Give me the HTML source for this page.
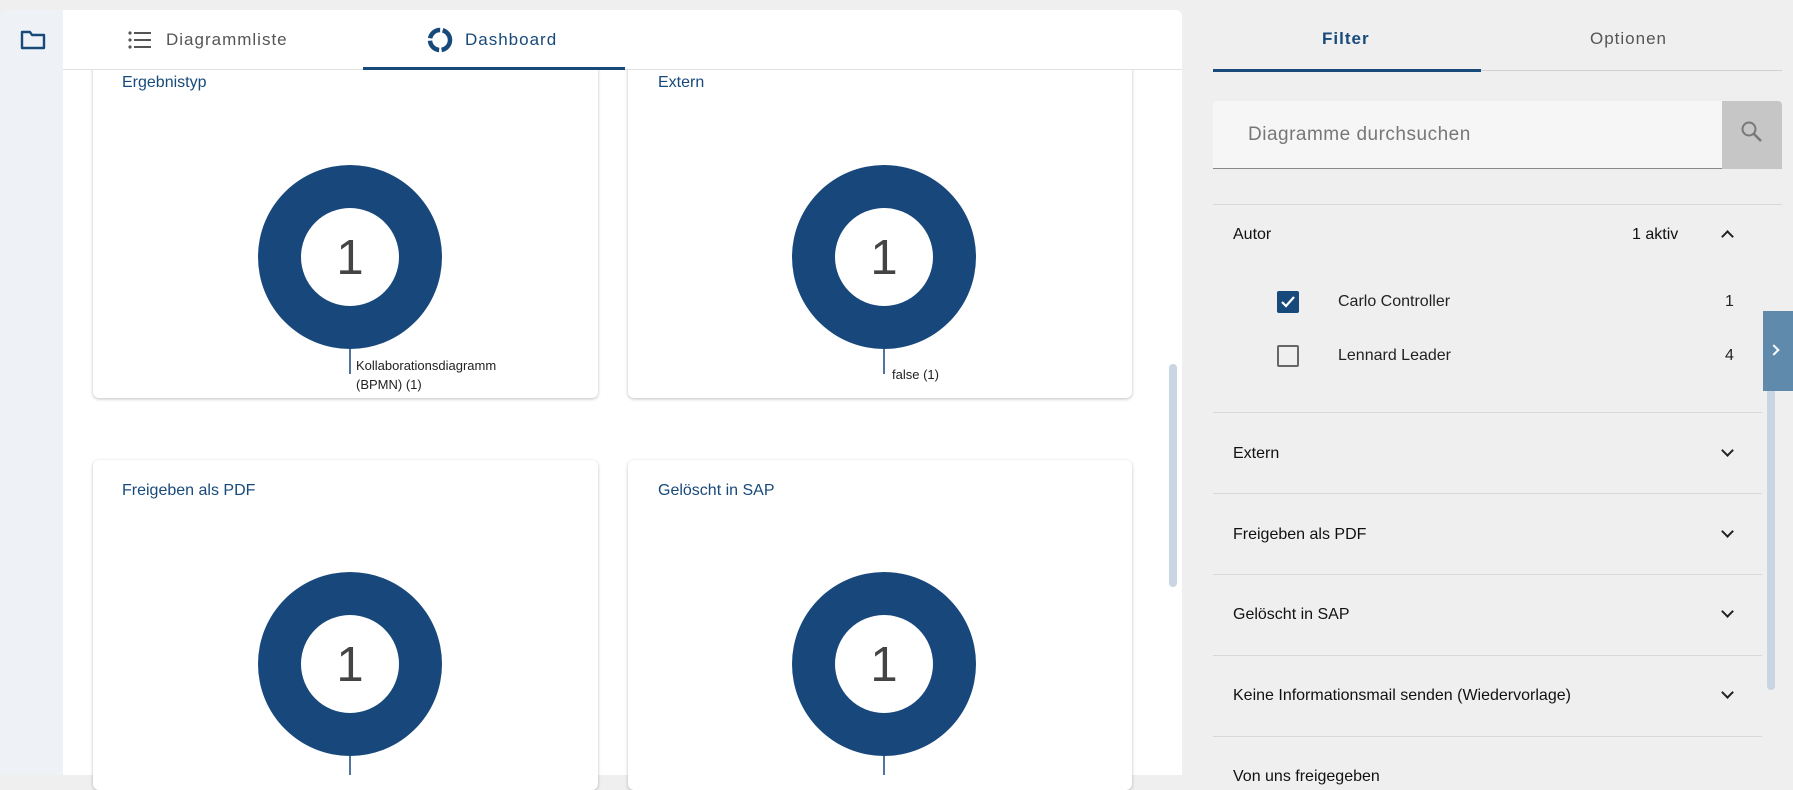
<!DOCTYPE html>
<html><head><meta charset="utf-8"><style>
*{box-sizing:border-box;margin:0;padding:0}
body{width:1793px;height:775px;overflow:hidden;background:#efefef;font-family:"Liberation Sans",Roboto,sans-serif;position:relative}
.a{position:absolute}
.side{left:0;top:10px;width:63px;height:765px;background:#eef2f6;border-top-left-radius:6px}
.main{left:63px;top:10px;width:1119px;height:765px;background:#fff;border-top-right-radius:6px;overflow:hidden}
.tab{font-size:17px;letter-spacing:1px}
.card{background:#fff;border-radius:6px;box-shadow:0 1px 3px rgba(0,0,0,.25)}
.ct{color:#17497a;font-size:16px}
.lbl{font-size:13px;color:#222;line-height:19px}
.fl{font-size:16px;color:#111}
.hr{height:1px;background:#d8d8d8;left:1213px;width:549px}
.chev{width:9px;height:9px;border-right:2px solid #222;border-bottom:2px solid #222;transform:rotate(45deg)}
</style></head><body>
<div class="a side"></div>
<svg class="a" style="left:20px;top:29px" width="26" height="22" viewBox="0 0 26 22"><path d="M2 3h8l2 3h12v13H2z" fill="none" stroke="#17497a" stroke-width="2.4" stroke-linejoin="round"/></svg>
<div class="a main"></div>
<svg class="a" style="left:128px;top:30px" width="24" height="20" viewBox="0 0 24 20"><g fill="#555"><circle cx="2" cy="3" r="1.6"/><circle cx="2" cy="10" r="1.6"/><circle cx="2" cy="17" r="1.6"/><rect x="6" y="2" width="17" height="2"/><rect x="6" y="9" width="17" height="2"/><rect x="6" y="16" width="17" height="2"/></g></svg>
<div class="a tab" style="left:166px;top:30px;color:#555">Diagrammliste</div>
<svg class="a" style="left:427px;top:27px" width="26" height="26" viewBox="0 0 26 26"><circle cx="13" cy="13" r="10" fill="none" stroke="#17497a" stroke-width="4.5" stroke-dasharray="14 2.5"/></svg>
<div class="a tab" style="left:465px;top:30px;color:#17497a">Dashboard</div>
<div class="a" style="left:63px;top:69px;width:1119px;height:1px;background:#e0e0e0"></div>
<div class="a" style="left:363px;top:67px;width:262px;height:3px;background:#17497a"></div>
<div class="a card" style="left:93px;top:40px;width:505px;height:358px;clip-path:inset(30px -5px -5px -5px)"></div>
<div class="a card" style="left:628px;top:40px;width:504px;height:358px;clip-path:inset(30px -5px -5px -5px)"></div>
<div class="a card" style="left:93px;top:460px;width:505px;height:330px"></div>
<div class="a card" style="left:628px;top:460px;width:504px;height:330px"></div>
<div class="a ct" style="left:122px;top:74px">Ergebnistyp</div>
<div class="a ct" style="left:658px;top:74px">Extern</div>
<div class="a ct" style="left:122px;top:482px">Freigeben als PDF</div>
<div class="a ct" style="left:658px;top:482px">Gelöscht in SAP</div>
<svg class="a" style="left:0;top:0" width="1793" height="775">
<g fill="#17477b"><circle cx="350" cy="257" r="92"/><circle cx="884" cy="257" r="92"/><circle cx="350" cy="664" r="92"/><circle cx="884" cy="664" r="92"/></g>
<g fill="#fff"><circle cx="350" cy="257" r="49"/><circle cx="884" cy="257" r="49"/><circle cx="350" cy="664" r="49"/><circle cx="884" cy="664" r="49"/></g>
<g stroke="#17477b" stroke-width="1.5"><line x1="350" y1="349" x2="350" y2="374"/><line x1="884" y1="349" x2="884" y2="374"/><line x1="350" y1="756" x2="350" y2="775"/><line x1="884" y1="756" x2="884" y2="775"/></g>
<g font-family="Liberation Sans,sans-serif" font-size="49" fill="#444" text-anchor="middle"><text x="350" y="274">1</text><text x="884" y="274">1</text><text x="350" y="681">1</text><text x="884" y="681">1</text></g>
</svg>
<div class="a lbl" style="left:356px;top:356px">Kollaborationsdiagramm<br>(BPMN) (1)</div>
<div class="a lbl" style="left:892px;top:365px">false (1)</div>
<div class="a" style="left:1169px;top:364px;width:8px;height:223px;background:#c9d5e0;border-radius:4px"></div>
<div class="a tab" style="left:1322px;top:29px;color:#17497a;font-weight:bold">Filter</div>
<div class="a tab" style="left:1590px;top:29px;color:#555">Optionen</div>
<div class="a" style="left:1213px;top:70px;width:569px;height:1px;background:#d0d0d0"></div>
<div class="a" style="left:1213px;top:69px;width:268px;height:3px;background:#17497a"></div>
<div class="a" style="left:1213px;top:101px;width:569px;height:68px;background:#f6f6f6;border-bottom:1px solid #888;border-radius:4px 4px 0 0"></div>
<div class="a" style="left:1722px;top:101px;width:60px;height:68px;background:#c6c6c6;border-radius:0 4px 0 0"></div>
<svg class="a" style="left:1740px;top:120px" width="24" height="24" viewBox="0 0 24 24"><circle cx="9" cy="9" r="6.5" fill="none" stroke="#777" stroke-width="2"/><line x1="14" y1="14" x2="21" y2="21" stroke="#777" stroke-width="2.5"/></svg>
<div class="a" style="left:1248px;top:124px;font-size:19px;color:#777;letter-spacing:.5px">Diagramme durchsuchen</div>
<div class="a hr" style="top:204px;width:569px"></div>
<div class="a fl" style="left:1233px;top:226px">Autor</div>
<div class="a fl" style="left:1632px;top:226px">1 aktiv</div>
<div class="a chev" style="left:1723px;top:232px;transform:rotate(225deg)"></div>
<div class="a" style="left:1277px;top:291px;width:22px;height:22px;background:#17497a;border-radius:2px"></div>
<svg class="a" style="left:1277px;top:291px" width="22" height="22"><path d="M5 11l4 4 8-9" fill="none" stroke="#fff" stroke-width="2.2"/></svg>
<div class="a" style="left:1277px;top:345px;width:22px;height:22px;border:2px solid #666;border-radius:2px"></div>
<div class="a fl" style="left:1338px;top:293px;color:#222">Carlo Controller</div>
<div class="a fl" style="left:1725px;top:293px;color:#222">1</div>
<div class="a fl" style="left:1338px;top:347px;color:#222">Lennard Leader</div>
<div class="a fl" style="left:1725px;top:347px;color:#222">4</div>
<div class="a hr" style="top:412px"></div>
<div class="a fl" style="left:1233px;top:445px">Extern</div>
<div class="a chev" style="left:1723px;top:446px"></div>
<div class="a hr" style="top:493px"></div>
<div class="a fl" style="left:1233px;top:526px">Freigeben als PDF</div>
<div class="a chev" style="left:1723px;top:527px"></div>
<div class="a hr" style="top:574px"></div>
<div class="a fl" style="left:1233px;top:606px">Gelöscht in SAP</div>
<div class="a chev" style="left:1723px;top:607px"></div>
<div class="a hr" style="top:655px"></div>
<div class="a fl" style="left:1233px;top:687px">Keine Informationsmail senden (Wiedervorlage)</div>
<div class="a chev" style="left:1723px;top:688px"></div>
<div class="a hr" style="top:736px"></div>
<div class="a fl" style="left:1233px;top:768px">Von uns freigegeben</div>
<div class="a" style="left:1767px;top:377px;width:8px;height:313px;background:#c9d5e0;border-radius:4px"></div>
<div class="a" style="left:1763px;top:311px;width:30px;height:80px;background:#5f8aab"></div>
<div class="a" style="left:1770px;top:346px;width:8px;height:8px;border-right:2.5px solid #fff;border-top:2.5px solid #fff;transform:rotate(45deg)"></div>
</body></html>
